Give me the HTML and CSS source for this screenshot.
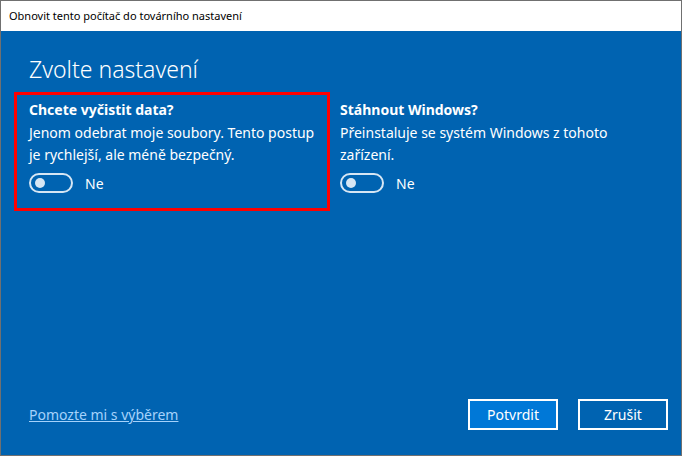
FILE: index.html
```html
<html>
    <head>
        <meta charset="utf-8">
        <title>Obnovit tento počítač</title>
        <link rel="stylesheet" href="styles.css">
    </head>
    <body>
        <div id="window">
            <div id="titlebar">Obnovit tento počítač do továrního nastavení</div>

            <div id="content">
                <h1 class="heading">Zvolte nastavení</h1>

                <div class="options">
                    <div class="option selected">
                        <div class="optionTitle">Chcete vyčistit data?</div>
                        <div class="optionText">Jenom odebrat moje soubory. Tento postup je rychlejší, ale méně bezpečný.</div>
                        <div class="toggleRow">
                            <span class="toggle"><span class="knob"></span></span>
                            <span class="toggleLabel">Ne</span>
                        </div>
                    </div>

                    <div class="option">
                        <div class="optionTitle">Stáhnout Windows?</div>
                        <div class="optionText">Přeinstaluje se systém Windows z tohoto zařízení.</div>
                        <div class="toggleRow">
                            <span class="toggle"><span class="knob"></span></span>
                            <span class="toggleLabel">Ne</span>
                        </div>
                    </div>
                </div>

                <div id="footer">
                    <a class="helpLink" href="#">Pomozte mi s výběrem</a>
                    <div class="buttons">
                        <button class="button primary">Potvrdit</button>
                        <button class="button">Zrušit</button>
                    </div>
                </div>
            </div>
        </div>
    </body>
</html>
```

FILE: styles.css
```css
body {
    margin: 0;
    font-family: "Noto Sans", "Liberation Sans", sans-serif;
}

#window {
    width: 682px;
    height: 456px;
    box-sizing: border-box;
    border: 1px solid #707070;
    display: flex;
    flex-direction: column;
}

#titlebar {
    height: 30px;
    line-height: 29px;
    padding-left: 8px;
    background-color: #ffffff;
    color: #000000;
    font-size: 11px;
}

#content {
    flex: 1;
    background-color: #0063b1;
    color: #ffffff;
    display: flex;
    flex-direction: column;
    padding: 0 13px 25px 13px;
}

.heading {
    margin: 20px 0 0 15px;
    font-size: 23px;
    font-weight: 300;
    line-height: 36px;
}

.options {
    display: flex;
    gap: 10px;
    margin-top: 5px;
}

.option {
    width: 300px;
    padding: 8px 0 15px 0;
}

.option.selected {
    width: 286px;
    padding: 5px 12px 15px 12px;
    border: 3px solid #ff0000;
}

.optionTitle {
    font-size: 14px;
    font-weight: 700;
    line-height: 20px;
}

.optionText {
    margin-top: 2px;
    font-size: 14px;
    line-height: 22px;
}

.toggleRow {
    display: flex;
    align-items: center;
    margin-top: 7px;
}

.toggle {
    width: 44px;
    height: 20px;
    box-sizing: border-box;
    border: 2px solid #d6e6f4;
    border-radius: 10px;
    display: flex;
    align-items: center;
    padding-left: 4px;
}

.knob {
    width: 10px;
    height: 10px;
    border-radius: 50%;
    background-color: #d6e6f4;
}

.toggleLabel {
    margin-left: 12px;
    font-size: 14px;
}

#footer {
    margin-top: auto;
    display: flex;
    align-items: center;
    justify-content: space-between;
    padding-left: 15px;
}

.helpLink {
    color: #a5d2fb;
    font-size: 14px;
}

.buttons {
    display: flex;
    gap: 20px;
}

.button {
    width: 90px;
    height: 31px;
    border: 2px solid #ffffff;
    background-color: transparent;
    color: #ffffff;
    font-family: "Noto Sans", "Liberation Sans", sans-serif;
    font-size: 14px;
}

.button.primary {
    background-color: #0078d7;
}
```
